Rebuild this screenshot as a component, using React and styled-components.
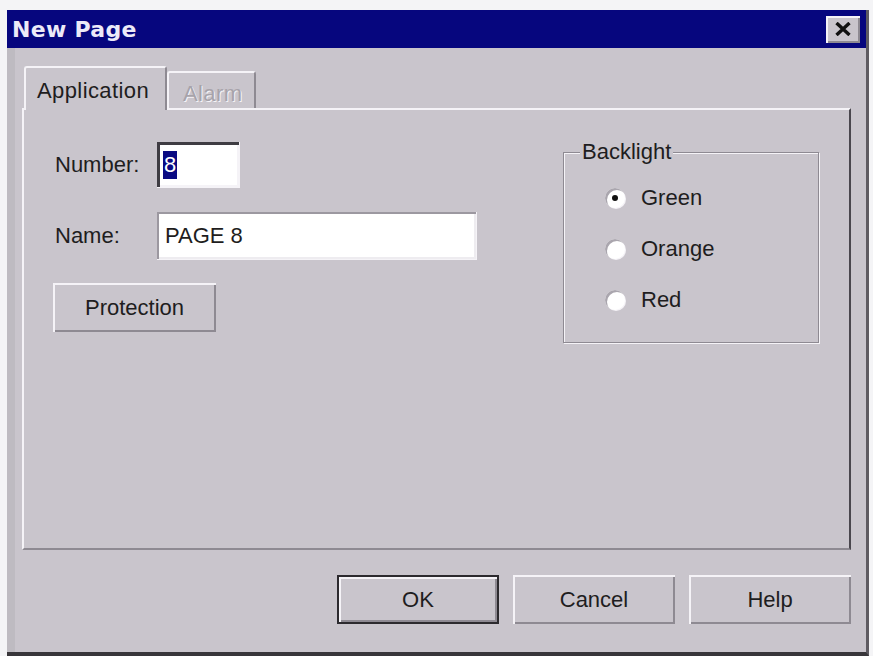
import React from "react";
import styled, { createGlobalStyle } from "styled-components";

const face = "#c9c5cc";
const light = "#f5f3f7";
const shade = "#8e8a92";
const dark = "#4a474e";
const ink = "#1e1d20";
const uiFont = `"Liberation Sans", Arial, sans-serif`;

const GlobalStyle = createGlobalStyle`
  html, body {
    margin: 0;
    background: #f4f4f6;
  }
  body {
    font-family: ${uiFont};
    font-size: 22px;
    color: ${ink};
  }
`;

const Page = styled.div`
  padding: 10px 4px 0 7px;
  width: 873px;
  height: 656px;
  box-sizing: border-box;
`;

const Window = styled.div`
  width: 862px;
  height: 646px;
  box-sizing: border-box;
  display: flex;
  flex-direction: column;
  background: ${face};
  border-right: 3px solid #5e5b61;
  border-bottom: 4px solid #38363a;
`;

const TitleBar = styled.div`
  height: 38px;
  flex: none;
  display: flex;
  align-items: center;
  justify-content: space-between;
  padding: 0 6px 0 5px;
  background: #06067e;
`;

const Title = styled.span`
  font-family: "DejaVu Sans", Verdana, sans-serif;
  font-weight: bold;
  font-size: 22px;
  color: #eceaf8;
  letter-spacing: 0.3px;
`;

const CloseButton = styled.div`
  width: 34px;
  height: 27px;
  display: flex;
  align-items: center;
  justify-content: center;
  background: ${face};
  box-shadow: inset 2px 2px ${light}, inset -2px -2px ${shade};
`;

const Body = styled.div`
  flex: 1;
  display: flex;
  flex-direction: column;
  border-left: 8px solid #bebbc1;
  padding: 18px 15px 0 7px;
`;

const TabRow = styled.div`
  display: flex;
  align-items: flex-end;
  padding-left: 2px;
  margin-bottom: -2px;
  position: relative;
  z-index: 1;
`;

const Tab = styled.div`
  box-sizing: border-box;
  width: ${(p) => p.$w}px;
  height: ${(p) => (p.$active ? "44px" : "37px")};
  margin-bottom: ${(p) => (p.$active ? "0" : "2px")};
  padding: ${(p) => (p.$active ? "11px 0 0 11px" : "9px 0 0 14px")};
  line-height: 24px;
  white-space: nowrap;
  background: ${face};
  border-top: 2px solid ${light};
  border-left: 2px solid ${light};
  border-right: 2px solid ${shade};
  border-radius: 3px 3px 0 0;
  color: ${(p) => (p.$disabled ? "#a7a3aa" : ink)};
  text-shadow: ${(p) => (p.$disabled ? `1px 1px 0 ${light}` : "none")};
  letter-spacing: 0.4px;
`;

const Panel = styled.div`
  height: 442px;
  box-sizing: border-box;
  display: flex;
  justify-content: space-between;
  align-items: flex-start;
  padding: 32px 30px 0 29px;
  border-top: 2px solid ${light};
  border-left: 2px solid ${light};
  border-right: 2px solid ${dark};
  border-bottom: 2px solid ${shade};
`;

const Fields = styled.div`
  display: flex;
  flex-direction: column;
  align-items: flex-start;
`;

const FieldRow = styled.div`
  display: flex;
  align-items: center;
  margin-bottom: ${(p) => p.$gap}px;
`;

const Label = styled.span`
  width: 102px;
  padding-left: 2px;
`;

const TextBox = styled.div`
  box-sizing: border-box;
  width: ${(p) => p.$w}px;
  height: ${(p) => p.$h}px;
  display: flex;
  align-items: center;
  padding-left: ${(p) => p.$pad}px;
  background: #ffffff;
  box-shadow: ${(p) =>
    p.$focused
      ? `inset 3px 3px 0 #3e3c42, inset -2px -2px 0 ${light}`
      : `inset 2px 2px 0 #9c98a0, inset -2px -2px 0 #eeecf0`};
  border-bottom: 1px solid ${light};
  border-right: 1px solid ${light};
`;

const Selected = styled.span`
  background: #0a0a82;
  color: #ffffff;
  line-height: 28px;
  padding: 0 1px;
`;

const Button = styled.button`
  box-sizing: border-box;
  width: ${(p) => p.$w || 162}px;
  height: 49px;
  padding: 0;
  font-family: ${uiFont};
  font-size: 22px;
  color: ${ink};
  background: ${face};
  border: ${(p) => (p.$default ? "2px solid #2c2a2e" : "none")};
  box-shadow: inset 2px 2px 0 ${light}, inset -2px -2px 0 ${shade};
`;

const Group = styled.div`
  position: relative;
  box-sizing: border-box;
  width: 256px;
  height: 191px;
  margin-top: 10px;
  border: 1px solid ${shade};
  box-shadow: inset 1px 1px 0 ${light}, 1px 1px 0 ${light};
  padding: 33px 0 0 41px;
  display: flex;
  flex-direction: column;
  gap: 27px;
`;

const Legend = styled.span`
  position: absolute;
  top: -13px;
  left: 16px;
  padding: 0 2px;
  line-height: 24px;
  background: ${face};
`;

const RadioRow = styled.div`
  display: flex;
  align-items: center;
  gap: 16px;
  height: 24px;
`;

const RadioDot = styled.span`
  width: 20px;
  height: 20px;
  border-radius: 50%;
  background: #ffffff;
  box-shadow: inset 2px 2px 0 #aaa6ae, 1px 1px 0 ${light};
  display: flex;
  align-items: center;
  justify-content: center;
  &::after {
    content: "";
    width: 6px;
    height: 6px;
    border-radius: 50%;
    background: ${(p) => (p.$checked ? "#111" : "transparent")};
  }
`;

const Footer = styled.div`
  display: flex;
  justify-content: flex-end;
  gap: 14px;
  padding-top: 25px;
`;

const backlights = [
  { name: "Green", checked: true },
  { name: "Orange", checked: false },
  { name: "Red", checked: false },
];

export default function App() {
  return (
    <>
      <GlobalStyle />
      <Page>
        <Window>
          <TitleBar>
            <Title>New Page</Title>
            <CloseButton>
              <svg width="16" height="14" viewBox="0 0 16 14">
                <path d="M1.5 1 L14.5 13 M14.5 1 L1.5 13" stroke="#111" strokeWidth="3.4" />
              </svg>
            </CloseButton>
          </TitleBar>
          <Body>
            <TabRow>
              <Tab $active $w={143}>Application</Tab>
              <Tab $disabled $w={89}>Alarm</Tab>
            </TabRow>
            <Panel>
              <Fields>
                <FieldRow $gap={24}>
                  <Label>Number:</Label>
                  <TextBox $w={83} $h={46} $pad={6} $focused>
                    <Selected>8</Selected>
                  </TextBox>
                </FieldRow>
                <FieldRow $gap={23}>
                  <Label>Name:</Label>
                  <TextBox $w={320} $h={48} $pad={8}>
                    PAGE 8
                  </TextBox>
                </FieldRow>
                <Button $w={163}>Protection</Button>
              </Fields>
              <Group>
                <Legend>Backlight</Legend>
                {backlights.map((b) => (
                  <RadioRow key={b.name}>
                    <RadioDot $checked={b.checked} />
                    <span>{b.name}</span>
                  </RadioRow>
                ))}
              </Group>
            </Panel>
            <Footer>
              <Button $default>OK</Button>
              <Button>Cancel</Button>
              <Button>Help</Button>
            </Footer>
          </Body>
        </Window>
      </Page>
    </>
  );
}
